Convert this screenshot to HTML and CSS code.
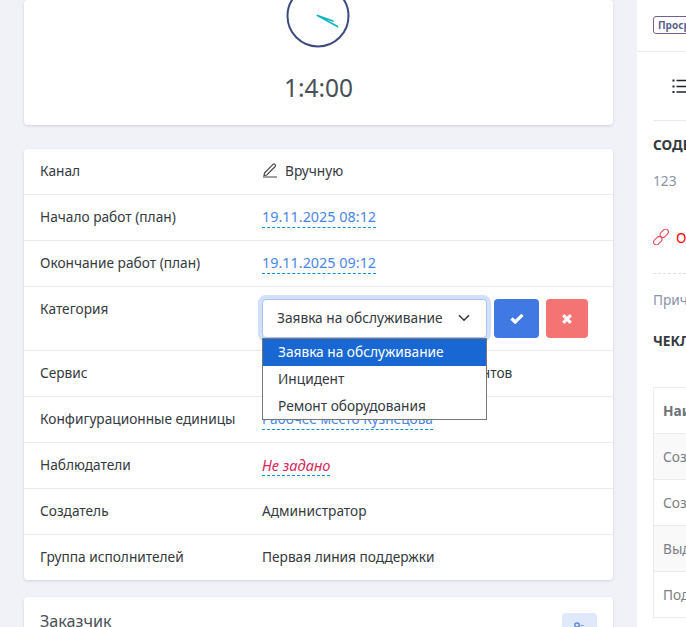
FILE: index.html
```html
<!DOCTYPE html>
<html lang="ru">
<head>
<meta charset="utf-8">
<title>Заявка</title>
<link rel="stylesheet" href="styles.css">
</head>
<body>
<div class="page">
  <main class="left">
    <section class="card timer">
      <svg class="clock" width="64" height="64" viewBox="0 0 64 64">
        <circle cx="32" cy="32" r="30.500" fill="none" stroke="#3b4a80" stroke-width="2"/>
        <path d="M31.500 31.500 L51.500 42.500 M31.500 31.500 L47 37" fill="none" stroke="#12b5c0" stroke-width="1.800" stroke-linecap="round"/>
      </svg>
      <div class="time">1:4:00</div>
    </section>

    <section class="card details">
      <div class="row"><div class="label">Канал</div><div class="value">
        <svg class="pencil" width="16" height="16" viewBox="0 0 16 16"><path d="M2.500 11 11 2.300a1.300 1.300 0 0 1 1.800 0l.4.4a1.300 1.300 0 0 1 0 1.800L4.800 13 2 13.500z M1 15H15" fill="none" stroke="#4a4440" stroke-width="1.100"/></svg>
        <span>Вручную</span></div></div>
      <div class="row"><div class="label">Начало работ (план)</div><div class="value"><a class="editable date">19.11.2025 08:12</a></div></div>
      <div class="row"><div class="label">Окончание работ (план)</div><div class="value"><a class="editable date">19.11.2025 09:12</a></div></div>
      <div class="row row-edit"><div class="label">Категория</div><div class="value editor">
        <div class="select"><span>Заявка на обслуживание</span>
          <svg width="12" height="8" viewBox="0 0 12 8"><path d="M1 1.200 6 6.200 11 1.200" fill="none" stroke="#343a40" stroke-width="1.600"/></svg>
        </div>
        <button class="btn ok" type="button"><svg width="14" height="11" viewBox="0 0 14 11"><path d="M1.500 5.500 5.200 9 12.500 1.800" fill="none" stroke="#fff" stroke-width="3.200"/></svg></button>
        <button class="btn cancel" type="button"><svg width="10" height="10" viewBox="0 0 10 10"><path d="M1.200 1.200 8.800 8.800M8.800 1.200 1.200 8.800" fill="none" stroke="#fff" stroke-width="3.200"/></svg></button>
        <ul class="options">
          <li class="active">Заявка на обслуживание</li>
          <li>Инцидент</li>
          <li>Ремонт оборудования</li>
        </ul>
      </div></div>
      <div class="row"><div class="label">Сервис</div><div class="value"><span>Обслуживание рабочих компонентов</span></div></div>
      <div class="row"><div class="label">Конфигурационные единицы</div><div class="value"><a class="editable">Рабочее место Кузнецова</a></div></div>
      <div class="row"><div class="label">Наблюдатели</div><div class="value"><a class="editable empty">Не задано</a></div></div>
      <div class="row"><div class="label">Создатель</div><div class="value">Администратор</div></div>
      <div class="row"><div class="label">Группа исполнителей</div><div class="value">Первая линия поддержки</div></div>
    </section>

    <section class="card customer">
      <h2>Заказчик</h2>
      <span class="user-btn"><svg width="12" height="12" viewBox="0 0 12 12"><circle cx="3" cy="3" r="2.200" fill="none" stroke="#4a7fe0" stroke-width="1.300"/><path d="M6.500 3.500h3" stroke="#7fa5ea" stroke-width="1.300"/></svg></span>
    </section>
  </main>

  <aside class="side">
    <div class="side-top"><span class="badge">Просрочена</span></div>
    <div class="side-body">
      <div class="tabs">
        <svg width="16" height="14" viewBox="0 0 16 14"><path d="M4.500 1.500H16M4.500 7.500H16M4.500 13H16" stroke="#1f2328" stroke-width="1.300"/><path d="M0.500 1.500H2.500M0.500 7.500H2.500M0.500 13H2.500" stroke="#1f2328" stroke-width="2"/></svg>
      </div>
      <h3 class="heading first">СОДЕРЖАНИЕ</h3>
      <p class="content">123</p>
      <div class="link-line">
        <svg width="16" height="16" viewBox="0 0 16 16"><g fill="none" stroke="#ee4b5b" stroke-width="1.100"><rect x="6.500" y="1.500" width="9.500" height="5.500" rx="2.750" transform="rotate(-45 11.250 4.250)"/><rect x="0" y="9" width="9.500" height="5.500" rx="2.750" transform="rotate(-45 4.750 11.750)"/></g></svg>
        <span>Ожидает</span>
      </div>
      <p class="reason">Причина</p>
      <h3 class="heading">ЧЕКЛИСТ</h3>
      <table class="checklist">
        <tr><th>Наименование</th></tr>
        <tr class="odd"><td>Создание</td></tr>
        <tr><td>Создание</td></tr>
        <tr class="odd"><td>Выдача</td></tr>
        <tr><td>Подпись</td></tr>
      </table>
    </div>
  </aside>
</div>
</body>
</html>
```

FILE: styles.css
```css
* { box-sizing: border-box; }
html, body { margin: 0; height: 627px; overflow: hidden; }
body {
  background: #f1f1f8;
  font-family: "Noto Sans", "Liberation Sans", sans-serif;
  font-size: 13.700px;
  color: #343a40;
}
.page { display: flex; height: 627px; overflow: hidden; padding-left: 24px; gap: 24px; width: 720px; }
.left { width: 589px; flex: none; display: flex; flex-direction: column; gap: 17px; }
.card {
  background: #fff;
  border-radius: 4px;
  box-shadow: 0 1px 3px rgba(40, 40, 60, .16);
}
.timer {
  height: 125px;
  display: flex;
  flex-direction: column;
  align-items: center;
  overflow: hidden;
  flex: none;
  margin-bottom: 7px;
}
.clock { margin-top: -16px; flex: none; margin-left: -1px; }
.time { margin-top: 24px; font-size: 24.500px; line-height: 32px; color: #495057; }
.details { flex: none; }
.row {
  display: flex;
  height: 46px;
  align-items: center;
  padding: 0 0 2px 16px;
  border-bottom: 1px solid #e9ebee;
}
.row:last-child { border-bottom: 0; height: 45px; }
.label { width: 222px; flex: none; }
.value { display: flex; align-items: center; gap: 7px; }
.pencil { flex: none; margin-top: -1px; }
.editable {
  color: #4a86e8;
  border-bottom: 1px dashed #0a8fd8;
  line-height: 20px;
  margin-top: 2px;
}
.date { font-size: 14.400px; }
.editable.empty { color: #d6285d; font-style: italic; font-size: 14.600px; }
.row-edit { height: 64px; align-items: flex-start; padding-bottom: 0; }
.row-edit .label { margin-top: 12px; }
.editor { position: relative; gap: 7px; margin-top: 12px; }
.select {
  width: 225px;
  height: 39px;
  border: 1px solid #a9c3f3;
  box-shadow: 0 0 0 4px #d3e0f9;
  border-radius: 4px;
  background: #fff;
  display: flex;
  align-items: center;
  justify-content: space-between;
  padding: 0 16px 2px 14px;
}
.btn {
  width: 45px;
  height: 39px;
  border: 0;
  border-radius: 4px;
  display: flex;
  align-items: center;
  justify-content: center;
  padding: 0;
}
.ok { background: #4079e4; }
.cancel { background: #f47373; width: 42px; }
.options {
  position: absolute;
  left: 0;
  top: 39px;
  width: 225px;
  margin: 0;
  padding: 0;
  list-style: none;
  background: #fff;
  border: 1px solid #767676;
  z-index: 5;
}
.options li { height: 27px; line-height: 25px; padding-left: 15px; }
.options li:last-child { height: 26px; }
.options li.active { background: #1967d2; color: #fff; }
.customer { position: relative; height: 60px; padding: 13px 16px; flex: none; display: flex; justify-content: space-between; }
.customer h2 { margin: 0; font-weight: 400; font-size: 16.200px; line-height: 22px; color: #495057; }
.user-btn {
  width: 35px; height: 30px; border-radius: 4px; background: #dfe9fb;
  display: flex; align-items: center; justify-content: center; margin-top: 3px;
}
.side { flex: none; width: 400px; background: #fff; }
.side-top { height: 52px; border-bottom: 1px solid #e9ebee; padding: 16px 0 0 16px; }
.badge {
  display: block;
  width: max-content;
  height: 18px;
  padding: 0 4px;
  border: 1px solid #6f5f92;
  border-radius: 3px;
  font-size: 10px;
  line-height: 16px;
  font-weight: 700;
  color: #5a5f8c;
}
.side-body { padding: 0 0 0 16px; }
.tabs { height: 69px; border-bottom: 1px solid #e9ebee; padding: 26px 0 0 19px; }
.heading { margin: 0; font-size: 13.700px; font-weight: 700; line-height: 18px; color: #343a40; }
.first { margin-top: 15px; }
.content { margin: 18px 0 0; color: #8a94a6; line-height: 18px; }
.link-line { display: flex; align-items: center; gap: 7px; color: #f00; margin-top: 38px; height: 18px; }
.reason { margin: 27px 0 0; padding-top: 17px; border-top: 1px dashed #dcdfe3; color: #8a94a6; line-height: 18px; }
.reason + .heading { margin-top: 23px; }
.checklist { border-collapse: collapse; width: 300px; margin-top: 37px; table-layout: fixed; }
.checklist th, .checklist td {
  border: 1px solid #e9ebee;
  height: 46px;
  text-align: left;
  padding: 0 9px;
  color: #7b8087;
}
.checklist th { font-weight: 700; color: #6c727a; }
.odd td { background: #f9f9f9; }
```
